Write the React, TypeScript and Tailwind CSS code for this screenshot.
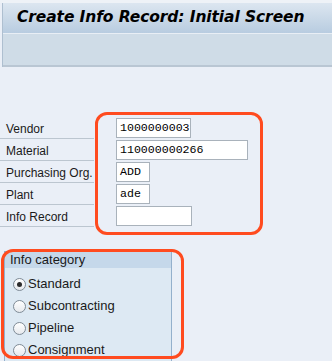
import { useState } from 'react'

interface FieldRow {
  label: string
  value: string
  width: string
}

const fields: FieldRow[] = [
  { label: 'Vendor', value: '1000000003', width: 'w-[75px]' },
  { label: 'Material', value: '110000000266', width: 'w-[132px]' },
  { label: 'Purchasing Org.', value: 'ADD', width: 'w-[34px]' },
  { label: 'Plant', value: 'ade', width: 'w-[34px]' },
  { label: 'Info Record', value: '', width: 'w-[76px]' },
]

const categories = ['Standard', 'Subcontracting', 'Pipeline', 'Consignment']

export default function App() {
  const [selected, setSelected] = useState('Standard')

  return (
    <div className="h-[361px] w-[332px] overflow-hidden bg-[#eaeff7] font-['Liberation_Sans',sans-serif] text-[13px] text-[#1a1a1a]">
      <div className="h-[3px] bg-[#eef2f7]" />
      <div className="ml-[2px] border-l border-[#aebfd0]">
        <div className="flex h-[30px] items-center bg-gradient-to-b from-[#dce6f0] to-[#b8cce0] pl-[14px]">
          <h1 className="font-['DejaVu_Sans',sans-serif] text-[15.5px] font-bold italic tracking-[-0.1px] text-black">
            Create Info Record: Initial Screen
          </h1>
        </div>
        <div className="h-[34px] border-t border-[#e8eef5] border-b-2 border-b-[#b9c6d3] bg-[#cfdce7]" />
      </div>

      <div className="relative mt-[50px]">
        <div className="flex flex-col">
          {fields.map((field) => (
            <div key={field.label} className="flex h-[22px] items-stretch">
              <div className="flex w-[94px] items-center whitespace-nowrap border-b border-[#bcc6d0] pl-[6px] pt-[3px] text-[12px]">
                {field.label}
              </div>
              <div className="flex items-center pl-[22px]">
                <div
                  className={`h-[20px] ${field.width} border border-[#a9b2bb] bg-white px-[3px] font-['Liberation_Mono',monospace] text-[11.6px] leading-[18px] text-black`}
                >
                  {field.value}
                </div>
              </div>
            </div>
          ))}
        </div>
        <div className="pointer-events-none absolute left-[95px] top-[-5px] h-[123px] w-[168px] rounded-[12px] border-[3px] border-[#ff4b1f]" />
      </div>

      <div className="relative ml-[4px] mt-[24px] w-[168px]">
        <div className="border border-[#94b0cc] bg-[#dde9f3]">
          <div className="flex h-[16px] items-center bg-[#c5d8ea] pl-[5px]">Info category</div>
          <div className="flex flex-col pb-[4px] pt-[5px]">
            {categories.map((category) => (
              <label key={category} className="flex h-[22px] cursor-pointer items-center pl-[8px]">
                <span className="flex h-[13px] w-[13px] items-center justify-center rounded-full border border-[#7f8b96] bg-gradient-to-b from-[#ffffff] to-[#e6e9ed]">
                  {selected === category && <span className="h-[5px] w-[5px] rounded-full bg-[#2c2c2c]" />}
                </span>
                <input
                  type="radio"
                  name="category"
                  className="hidden"
                  checked={selected === category}
                  onChange={() => setSelected(category)}
                />
                <span className="ml-[2px]">{category}</span>
              </label>
            ))}
          </div>
        </div>
        <div className="pointer-events-none absolute left-[-3px] top-[-2px] h-[110px] w-[183px] rounded-[12px] border-[3px] border-[#ff4b1f]" />
      </div>
    </div>
  )
}
